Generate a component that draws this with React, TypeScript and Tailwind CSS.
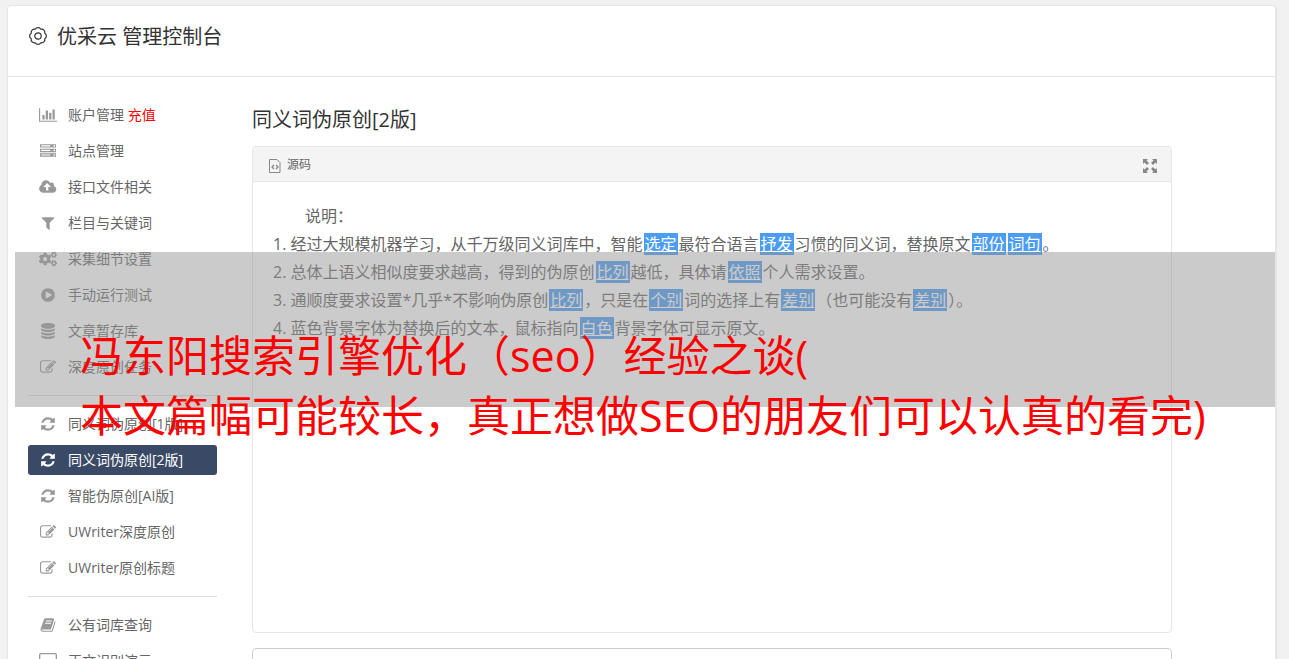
import React from "react";
import { FaCogs } from "react-icons/fa";

type Glyph = { box: string; d: string; width: string };

const glyphs: Record<string, Glyph> = {
  chart: {
    box: "0 0 2048 1792",
    width: "w-[18px]",
    d: "M640 896v512h-256v-512h256zm384-512v1024h-256v-1024h256zm1024 1152v128h-2048v-1536h128v1408h1920zm-640-896v768h-256v-768h256zm384-384v1152h-256v-1152h256z",
  },
  server: {
    box: "0 0 1792 1792",
    width: "w-4",
    d: "M128 1408h1024v-128h-1024v128zm0-512h1024v-128h-1024v128zm1568 448q0-40-28-68t-68-28-68 28-28 68 28 68 68 28 68-28 28-68zm-1568-960h1024v-128h-1024v128zm1568 448q0-40-28-68t-68-28-68 28-28 68 28 68 68 28 68-28 28-68zm0-512q0-40-28-68t-68-28-68 28-28 68 28 68 68 28 68-28 28-68zm96 832v384h-1792v-384h1792zm0-512v384h-1792v-384h1792zm0-512v384h-1792v-384h1792z",
  },
  cloud: {
    box: "-64 0 1984 1792",
    width: "w-[18px]",
    d: "M1216 864q0-14-9-23l-352-352q-9-9-23-9t-23 9l-351 351q-10 12-10 24 0 14 9 23t23 9h224v352q0 13 9.5 22.5t22.5 9.5h192q13 0 22.5-9.5t9.5-22.5v-352h224q13 0 22.5-9.5t9.5-22.5zm640 288q0 159-112.5 271.5t-271.5 112.5h-1088q-185 0-316.5-131.5t-131.5-316.5q0-130 70-240t188-165q-2-30-2-43 0-212 150-362t362-150q156 0 285.5 87t188.5 231q71-62 166-62 106 0 181 75t75 181q0 76-41 138 130 31 213.5 135.5t83.5 238.5z",
  },
  filter: {
    box: "0 0 1792 1792",
    width: "w-4",
    d: "M1595 295q17 41-14 70l-493 493v742q0 42-39 59-13 5-25 5-27 0-45-19l-256-256q-19-19-19-45v-486l-493-493q-31-29-14-70 17-39 59-39h1280q42 0 59 39z",
  },
  play: {
    box: "0 0 1792 1792",
    width: "w-4",
    d: "M896 128q209 0 385.5 103t279.5 279.5 103 385.5-103 385.5-279.5 279.5-385.5 103-385.5-103-279.5-279.5-103-385.5 103-385.5 279.5-279.5 385.5-103zm384 823q32-18 32-55t-32-55l-544-320q-31-19-64-1-32 19-32 56v640q0 37 32 56 16 8 32 8 17 0 32-9z",
  },
  database: {
    box: "0 0 1792 1792",
    width: "w-4",
    d: "M896 768q237 0 443-43t325-127v170q0 69-103 128t-280 93.5-385 34.5-385-34.5-280-93.5-103-128v-170q119 84 325 127t443 43zm0 768q237 0 443-43t325-127v170q0 69-103 128t-280 93.5-385 34.5-385-34.5-280-93.5-103-128v-170q119 84 325 127t443 43zm0-384q237 0 443-43t325-127v170q0 69-103 128t-280 93.5-385 34.5-385-34.5-280-93.5-103-128v-170q119 84 325 127t443 43zm0-1152q208 0 385 34.5t280 93.5 103 128v128q0 69-103 128t-280 93.5-385 34.5-385-34.5-280-93.5-103-128v-128q0-69 103-128t280-93.5 385-34.5z",
  },
  edit: {
    box: "0 0 1792 1792",
    width: "w-4",
    d: "M888 1184l116-116-152-152-116 116v56h96v96h56zm440-720q-16-16-33 1l-350 350q-17 17-1 33t33-1l350-350q17-17 1-33zm80 594v190q0 119-84.5 203.5t-203.5 84.5h-832q-119 0-203.5-84.5t-84.5-203.5v-832q0-119 84.5-203.5t203.5-84.5h832q63 0 117 25 15 7 18 23 3 17-9 29l-49 49q-14 14-32 8-23-6-45-6h-832q-66 0-113 47t-47 113v832q0 66 47 113t113 47h832q66 0 113-47t47-113v-126q0-13 9-22l64-64q15-15 35-7t20 29zm-96-738l288 288-672 672h-288v-288zm444 132l-92 92-288-288 92-92q28-28 68-28t68 28l152 152q28 28 28 68t-28 68z",
  },
  refresh: {
    box: "0 0 1792 1792",
    width: "w-4",
    d: "M1639 1056q0 5-1 7-64 268-268 434.5t-478 166.5q-146 0-282.5-55t-243.5-157l-129 129q-19 19-45 19t-45-19-19-45v-448q0-26 19-45t45-19h448q26 0 45 19t19 45-19 45l-137 137q71 66 161 102t187 36q134 0 250-65t186-179q11-17 53-117 8-23 30-23h192q13 0 22.5 9.5t9.5 22.5zm25-800v448q0 26-19 45t-45 19h-448q-26 0-45-19t-19-45 19-45l138-138q-148-137-349-137-134 0-250 65t-186 179q-11 17-53 117-8 23-30 23h-199q-13 0-22.5-9.5t-9.5-22.5v-7q65-268 270-434.5t480-166.5q146 0 284 55.5t245 156.5l130-129q19-19 45-19t45 19 19 45z",
  },
  book: {
    box: "0 0 1792 1792",
    width: "w-4",
    d: "M1703 478q40 57 18 129l-275 906q-19 64-76.5 107.5t-122.5 43.5h-923q-77 0-148.5-53.5t-99.5-131.5q-24-67-2-127 0-4 3-27t4-37q1-8-3-21.5t-3-19.5q2-11 8-21t16.5-23.5 16.5-23.5q23-38 45-91.5t30-91.5q3-10 .5-30t-.5-28q3-11 17-28t17-23q21-36 42-92t25-90q1-9-2.5-32t.5-28q4-13 22-30.5t22-22.5q19-26 42.5-84.5t27.5-96.5q1-8-3-25.5t-2-26.5q2-8 9-18t18-23 17-21q8-12 16.5-30.5t15-35 16-36 19.5-32 26.5-23.5 36-11.5 47.5 5.5l-1 3q38-9 51-9h761q74 0 114 56t18 130l-274 906q-36 119-71.5 153.5t-128.5 34.5h-869q-27 0-38 15-11 16-1 43 24 70 144 70h923q29 0 56-15.5t35-41.5l300-987q7-22 5-57 38 15 59 43zm-1064 2q-4 13 2 22.5t20 9.5h608q13 0 25.5-9.5t16.5-22.5l21-64q4-13-2-22.5t-20-9.5h-608q-13 0-25.5 9.5t-16.5 22.5zm-83 256q-4 13 2 22.5t20 9.5h608q13 0 25.5-9.5t16.5-22.5l21-64q4-13-2-22.5t-20-9.5h-608q-13 0-25.5 9.5t-16.5 22.5z",
  },
  monitor: {
    box: "0 0 18 16",
    width: "w-[18px]",
    d: "M2 0h14a2 2 0 0 1 2 2v9a2 2 0 0 1-2 2h-5v2h2v1H5v-1h2v-2H2a2 2 0 0 1-2-2V2a2 2 0 0 1 2-2zm0 1.300a.7.7 0 0 0-.7.7v7.500h15.400V2a.7.7 0 0 0-.7-.7z",
  },
};

function Icon({ name }: { name: string }) {
  if (name === "cogs") return <FaCogs className="h-4 w-[18px]" aria-hidden="true" />;
  const g = glyphs[name];
  return (
    <svg viewBox={g.box} className={`h-4 shrink-0 ${g.width}`} fill="currentColor" aria-hidden="true">
      <path d={g.d} />
    </svg>
  );
}

type Item = { icon: string; label: string; extra?: string; active?: boolean };

const groups: Item[][] = [
  [
    { icon: "chart", label: "账户管理", extra: "充值" },
    { icon: "server", label: "站点管理" },
    { icon: "cloud", label: "接口文件相关" },
    { icon: "filter", label: "栏目与关键词" },
    { icon: "cogs", label: "采集细节设置" },
    { icon: "play", label: "手动运行测试" },
    { icon: "database", label: "文章暂存库" },
    { icon: "edit", label: "深度原创任务" },
  ],
  [
    { icon: "refresh", label: "同义词伪原创[1版]" },
    { icon: "refresh", label: "同义词伪原创[2版]", active: true },
    { icon: "refresh", label: "智能伪原创[AI版]" },
    { icon: "edit", label: "UWriter深度原创" },
    { icon: "edit", label: "UWriter原创标题" },
  ],
  [
    { icon: "book", label: "公有词库查询" },
    { icon: "monitor", label: "正文识别演示" },
  ],
];

function NavLink({ item }: { item: Item }) {
  return (
    <a
      href="#"
      aria-current={item.active ? "page" : undefined}
      className={`flex h-[30px] items-center gap-[11px] rounded-[3px] pl-[10px] text-sm ${
        item.active ? "bg-[#3a4a66] text-white" : "text-[#666]"
      }`}
    >
      <span className={`flex w-[19px] justify-center ${item.active ? "text-white" : "text-[#999]"}`}>
        <Icon name={item.icon} />
      </span>
      <span className="whitespace-nowrap">
        {item.label}
        {item.extra && <span className="text-[#f00]"> {item.extra}</span>}
      </span>
    </a>
  );
}

function Swap({ children }: { children: React.ReactNode }) {
  return <span className="mx-px bg-[#4a9cf5] px-px text-white underline">{children}</span>;
}

export default function App() {
  return (
    <div className="relative h-screen overflow-hidden bg-[#f1f1f1] pt-[5px] pr-3 pl-[7px] font-['Open_Sans','Noto_Sans_CJK_SC',sans-serif] text-[#666]">
      <div className="min-h-full rounded-t border border-r-2 border-[#e5e5e5] bg-white">
        <header className="flex h-[71px] items-start gap-[9px] border-b border-[#e5e5e5] pt-[17px] pl-5 text-[#333]">
          <svg viewBox="0 0 20 20" className="mt-[3px] size-5" fill="none" stroke="currentColor" strokeWidth="1.2" aria-hidden="true">
            <circle cx="10" cy="10" r="3.2" />
            <path
              d="M16.740 12.790A3.200 3.200 0 0 1 12.790 16.740A3.200 3.200 0 0 1 7.210 16.740A3.200 3.200 0 0 1 3.260 12.790A3.200 3.200 0 0 1 3.260 7.210A3.200 3.200 0 0 1 7.210 3.260A3.200 3.200 0 0 1 12.790 3.260A3.200 3.200 0 0 1 16.740 7.210A3.200 3.200 0 0 1 16.740 12.790z"
              strokeLinejoin="round"
            />
          </svg>
          <h1 className="text-xl leading-[28px]">优采云 管理控制台</h1>
        </header>

        <div className="flex items-start gap-[35px] pt-[23px] pr-[103px] pl-5">
          <nav className="w-[189px] shrink-0">
            {groups.map((group, i) => (
              <div key={i} className={i > 0 ? "mt-[13px] border-t border-[#ddd] pt-[13px]" : ""}>
                <ul className="flex flex-col gap-[6px]">
                  {group.map((item) => (
                    <li key={item.label}>
                      <NavLink item={item} />
                    </li>
                  ))}
                </ul>
              </div>
            ))}
          </nav>

          <main className="min-w-0 flex-1">
            <h2 className="mt-[6px] text-xl leading-[28px] text-[#333]">同义词伪原创[2版]</h2>
            <section className="mt-3 min-h-[487px] rounded border border-[#e5e5e5]">
              <div className="flex h-[35px] items-center justify-between rounded-t border-b border-[#e5e5e5] bg-[#f4f4f4] pt-px pr-[14px] pl-4">
                <div className="flex items-center gap-[6px] text-xs">
                  <svg viewBox="0 0 12 14" className="mt-[2px] h-[14px] w-3" fill="none" stroke="#888" aria-hidden="true">
                    <path d="M.5.5h7.500l3 3v10H.5z" />
                    <path d="M5 6L3 8l2 2M7 6l2 2-2 2" strokeWidth="1.300" />
                  </svg>
                  <span>源码</span>
                </div>
                <button type="button" aria-label="全屏" className="mt-[2px]">
                  <svg viewBox="0 0 14 14" className="size-[14px]" fill="#888" aria-hidden="true">
                    <path d="M0 0h5L3.500 1.500 6 4 4 6 1.500 3.500 0 5zM14 0v5l-1.500-1.500L10 6 8 4l2.500-2.500L9 0zM0 14V9l1.500 1.500L4 8l2 2-2.500 2.500L5 14zM14 14H9l1.500-1.500L8 10l2-2 2.500 2.500L14 9z" />
                  </svg>
                </button>
              </div>
              <div className="px-5 pt-5 leading-[28px]">
                <p className="indent-[32px]">说明：</p>
                <p>
                  1. 经过大规模机器学习，从千万级同义词库中，智能<Swap>选定</Swap>最符合语言<Swap>抒发</Swap>习惯的同义词，替换原文<Swap>部份</Swap>
                  <Swap>词句</Swap>。
                </p>
                <p>
                  2. 总体上语义相似度要求越高，得到的伪原创<Swap>比列</Swap>越低，具体请<Swap>依照</Swap>个人需求设置。
                </p>
                <p>
                  3. 通顺度要求设置*几乎*不影响伪原创<Swap>比列</Swap>，只是在<Swap>个别</Swap>词的选择上有<Swap>差别</Swap>（也可能没有<Swap>差别</Swap>）。
                </p>
                <p>
                  4. 蓝色背景字体为替换后的文本，鼠标指向<Swap>白色</Swap>背景字体可显示原文。
                </p>
              </div>
            </section>
            <section className="mt-[15px] h-20 rounded border border-[#ccc]" />
          </main>
        </div>
      </div>

      <div className="absolute top-[252px] right-[14px] left-[15px] h-[155px] bg-[rgba(149,149,149,0.49)] pt-[74px] pl-[65px] text-[43px] leading-[60px] whitespace-nowrap text-[#f00]">
        <p>冯东阳搜索引擎优化（seo）经验之谈(</p>
        <p>本文篇幅可能较长，真正想做SEO的朋友们可以认真的看完)</p>
      </div>
    </div>
  );
}
